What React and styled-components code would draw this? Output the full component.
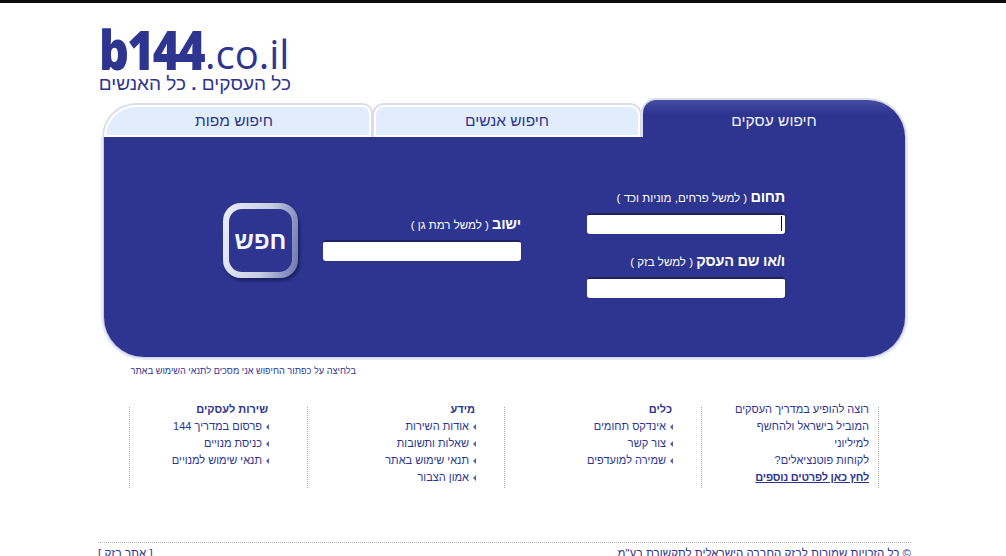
import styled, { createGlobalStyle } from 'styled-components'

const BLUE = '#2d3590'

const GlobalStyle = createGlobalStyle`
  html, body {
    margin: 0;
    height: 556px;
    overflow: hidden;
    background: #fff;
    font-family: "Liberation Sans", Arial, sans-serif;
    color: ${BLUE};
  }
`

const columns = [
  { title: 'כלים', width: 197, inset: 30, items: ['אינדקס תחומים', 'צור קשר', 'שמירה למועדפים'] },
  { title: 'מידע', width: 197, inset: 30, items: ['אודות השירות', 'שאלות ותשובות', 'תנאי שימוש באתר', 'אמון הצבור'] },
  { title: 'שירות לעסקים', width: 179, inset: 40, items: ['פרסום במדריך 144', 'כניסת מנויים', 'תנאי שימוש למנויים'] },
]

const App = () => {
  return <Page>
    <GlobalStyle />
    <TopBar />
    <Logo>
      <LogoName dir="ltr"><b>b144</b>.co.il</LogoName>
      <LogoSlogan>כל העסקים <i>.</i> כל האנשים</LogoSlogan>
    </Logo>

    <SearchBox>
      <Tabs dir="rtl">
        <Tab $active $width={262}>חיפוש עסקים</Tab>
        <Tab $width={266}>חיפוש אנשים</Tab>
        <Tab $last $width={267}>חיפוש מפות</Tab>
      </Tabs>
      <Panel dir="rtl">
        <FieldColumn>
          <Field>
            <FieldLabel><b>תחום</b> ( למשל פרחים, מוניות וכד )</FieldLabel>
            <InputWrap $caret><Input /></InputWrap>
          </Field>
          <Field>
            <FieldLabel><b>ו/או שם העסק</b> ( למשל בזק )</FieldLabel>
            <InputWrap><Input /></InputWrap>
          </Field>
        </FieldColumn>
        <FieldColumn $offset={27}>
          <Field>
            <FieldLabel><b>ישוב</b> ( למשל רמת גן )</FieldLabel>
            <InputWrap><Input /></InputWrap>
          </Field>
        </FieldColumn>
        <SearchButton><span>חפש</span></SearchButton>
      </Panel>
    </SearchBox>

    <Notice dir="rtl">בלחיצה על כפתור החיפוש אני מסכים לתנאי השימוש באתר</Notice>

    <Links dir="rtl">
      <LinkColumn $width={177} $inset={10}>
        רוצה להופיע במדריך העסקים<br />
        המוביל בישראל ולהחשף<br />
        למיליוני<br />
        לקוחות פוטנציאלים?<br />
        <a>לחץ כאן לפרטים נוספים</a>
      </LinkColumn>
      {columns.map((col) => (
        <LinkColumn key={col.title} $width={col.width} $inset={col.inset}>
          <h4>{col.title}</h4>
          {col.items.map((item) => <LinkItem key={item}>{item}</LinkItem>)}
        </LinkColumn>
      ))}
    </Links>

    <Footer dir="rtl">
      <span>© כל הזכויות שמורות לבזק החברה הישראלית לתקשורת בע"מ</span>
      <span>[ אתר בזק ]</span>
    </Footer>
  </Page>
}

export default App

const Page = styled.div`
  width: 1006px;
  height: 556px;
  overflow: hidden;
`

const TopBar = styled.div`
  height: 3px;
  background: #0d0d0d;
`

const Logo = styled.div`
  width: 192px;
  height: 68px;
  margin: 25px 0 0 99px;
`

const LogoName = styled.div`
  height: 44px;
  font-family: "Open Sans", sans-serif;
  font-size: 40px;
  line-height: 44px;
  text-align: left;
  white-space: nowrap;

  b {
    display: inline-block;
    width: 106px;
    font-size: 50px;
    letter-spacing: -2px;
    font-weight: 800;
    transform: scale(0.935, 1.1);
    transform-origin: left 80%;
  }
`

const LogoSlogan = styled.div`
  direction: rtl;
  text-align: right;
  font-size: 19px;
  line-height: 24px;
  white-space: nowrap;

  i {
    font-weight: bold;
    font-style: normal;
  }
`

const SearchBox = styled.div`
  width: 801px;
  margin: 4px 0 0 104px;
`

const Tabs = styled.div`
  display: flex;
  align-items: flex-end;
  gap: 3px;
  height: 37px;
`

const Tab = styled.div`
  box-sizing: border-box;
  width: ${(p) => p.$width}px;
  height: ${(p) => (p.$active ? 37 : 32)}px;
  line-height: ${(p) => (p.$active ? 42 : 28)}px;
  padding-right: ${(p) => (p.$last ? 7 : 0)}px;
  text-align: center;
  font-size: 15.5px;
  color: ${(p) => (p.$active ? '#f2f3fa' : BLUE)};
  background: ${(p) => (p.$active ? `linear-gradient(#454da3, ${BLUE} 14px)` : '#e2edfc')};
  border: ${(p) => (p.$active ? '0' : '2px solid #fff')};
  box-shadow: 0 0 0 2px #dcddec;
  clip-path: inset(-4px -4px 0 -4px);
  border-radius: ${(p) => (p.$active ? '14px 40px 0 0' : p.$last ? '40px 10px 0 0' : '10px 10px 0 0')};
`

const Panel = styled.div`
  box-sizing: border-box;
  height: 220px;
  padding: 51px 120px 0 0;
  display: flex;
  align-items: flex-start;
  gap: 66px;
  background: ${BLUE};
  border-radius: 0 0 40px 40px;
  box-shadow: 0 0 0 1px #c9cce6, 0 0 0 3px #e8e9f4;
  clip-path: inset(0 -4px -4px -4px);
`

const FieldColumn = styled.div`
  width: 198px;
  margin-top: ${(p) => p.$offset || 0}px;
  display: flex;
  flex-direction: column;
  gap: 18px;
`

const Field = styled.div`
  display: flex;
  flex-direction: column;
  gap: 7px;
`

const FieldLabel = styled.div`
  height: 18px;
  line-height: 18px;
  font-size: 11.5px;
  color: #fff;
  white-space: nowrap;

  b {
    font-size: 14.5px;
    letter-spacing: -0.2px;
  }
`

const InputWrap = styled.div`
  position: relative;
  height: 21px;

  &::after {
    content: '';
    display: ${(p) => (p.$caret ? 'block' : 'none')};
    position: absolute;
    right: 3px;
    top: 3px;
    width: 1px;
    height: 15px;
    background: #000;
  }
`

const Input = styled.input`
  box-sizing: border-box;
  display: block;
  width: 100%;
  height: 21px;
  padding: 0 4px;
  background: #fff;
  border: 0;
  border-top: 2px solid #1d2260;
  border-radius: 3px;
  outline: none;
`

const SearchButton = styled.button`
  box-sizing: border-box;
  width: 75px;
  height: 75px;
  margin: 15px -41px 0 0;
  padding: 6px;
  border: 0;
  border-radius: 18px;
  background: linear-gradient(100deg, #eceef6, #c9cee4 55%, #6a73ad);
  box-shadow: 2px 3px 3px #1c2266;

  span {
    display: block;
    height: 100%;
    border-radius: 13px;
    background: ${BLUE};
    color: #f4f5fb;
    font: bold 24px/63px "Liberation Sans", Arial, sans-serif;
    text-align: center;
  }
`

const Notice = styled.div`
  box-sizing: border-box;
  width: 356px;
  margin-top: 7px;
  height: 14px;
  line-height: 14px;
  font-size: 9.2px;
  white-space: nowrap;
`

const Links = styled.div`
  display: flex;
  width: 750px;
  height: 87px;
  margin: 23px 0 0 129px;
`

const LinkColumn = styled.div`
  box-sizing: border-box;
  position: relative;
  width: ${(p) => p.$width}px;
  padding-right: ${(p) => p.$inset}px;
  font-size: 11px;
  line-height: 17px;
  white-space: nowrap;

  &::after {
    content: '';
    position: absolute;
    right: 0;
    top: 6px;
    bottom: 0;
    border-right: 1px dotted #aaa;
  }

  &:last-child::before {
    content: '';
    position: absolute;
    left: 0;
    top: 6px;
    bottom: 0;
    border-left: 1px dotted #aaa;
  }

  a {
    font-weight: bold;
    letter-spacing: -0.2px;
    text-decoration: underline;
  }

  h4 {
    margin: 0;
    font-size: 11px;
    line-height: 17px;
  }
`

const LinkItem = styled.div`
  position: relative;
  margin-right: -1px;
  padding-right: 7px;

  &::before {
    content: '';
    position: absolute;
    right: 0;
    top: 6px;
    border: 3px solid transparent;
    border-left: 0;
    border-right: 3px solid #5560b0;
  }
`

const Footer = styled.div`
  box-sizing: border-box;
  width: 813px;
  margin: 54px 0 0 98px;
  padding-top: 3px;
  border-top: 1px dotted #aaa;
  display: flex;
  justify-content: space-between;
  font-size: 11.5px;
  line-height: 14px;
  white-space: nowrap;
`
